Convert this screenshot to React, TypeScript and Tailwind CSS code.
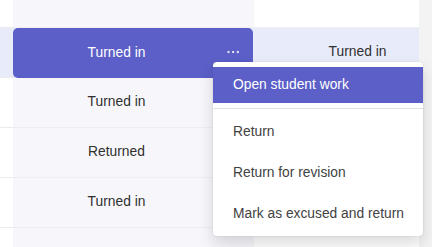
import clsx from "clsx";
import { MoreHorizontal } from "lucide-react";

type Row = {
  middle: string;
  right: string;
  selected?: boolean;
  height: string;
};

const rows: Row[] = [
  { middle: "", right: "", height: "h-[28px]" },
  { middle: "Turned in", right: "Turned in", selected: true, height: "h-[50px]" },
  { middle: "Turned in", right: "", height: "h-[50px]" },
  { middle: "Returned", right: "", height: "h-[50px]" },
  { middle: "Turned in", right: "", height: "h-[50px]" },
  { middle: "", right: "", height: "h-[50px]" },
];

const menuItems = ["Return", "Return for revision", "Mark as excused and return"];

const ContextMenu = () => (
  <div className="absolute left-[213px] top-[62px] w-[210px] rounded-[4px] bg-white pt-[5px] pb-[1px] shadow-[0_0_2px_rgba(0,0,0,0.12),0_8px_16px_rgba(0,0,0,0.14)]">
    <div className="flex h-[36px] items-center bg-[#5b5fc7] pl-[20px] text-white">
      Open student work
    </div>
    <div className="mt-[5px] mb-[3px] h-px bg-[#e0e0e0]" />
    {menuItems.map((item) => (
      <div key={item} className="flex h-[41px] items-center pl-[20px] text-[#424242]">
        {item}
      </div>
    ))}
  </div>
);

export default function App() {
  return (
    <div className="relative h-[247px] w-[432px] overflow-hidden bg-white font-['Liberation_Sans',Arial,sans-serif] text-[13.8px] text-[#303030]">
      <div className="flex flex-col">
        {rows.map((row, i) => (
          <div key={i} className={clsx("flex", row.height)}>
            <div
              className={clsx(
                "w-[13px] border-b border-[#ebebeb]",
                row.selected ? "bg-[#e8ebfa]" : "bg-white",
              )}
            />
            <div
              className={clsx(
                "w-[241px]",
                row.selected ? "bg-[#e8ebfa]" : "border-b border-[#efeff3] bg-[#f7f7fb]",
              )}
            >
              {row.selected ? (
                <div className="relative flex h-[50px] w-[240px] items-center justify-center rounded-[5px] bg-[#5b5fc7] pr-[33px] text-white">
                  {row.middle}
                  <MoreHorizontal
                    className="absolute right-[12px] top-[16px]"
                    size={16}
                    strokeWidth={1.5}
                  />
                </div>
              ) : (
                <div className="flex h-full w-[240px] items-center justify-center pr-[33px]">
                  {row.middle}
                </div>
              )}
            </div>
            <div
              className={clsx(
                "flex w-[165px] items-center justify-center border-b border-[#f0f0f0] pl-[42px]",
                row.selected ? "bg-[#e8ebfa]" : "bg-white",
              )}
            >
              {row.right}
            </div>
            <div className="w-[13px] bg-[#f3f3f3]" />
          </div>
        ))}
      </div>
      <ContextMenu />
    </div>
  );
}
